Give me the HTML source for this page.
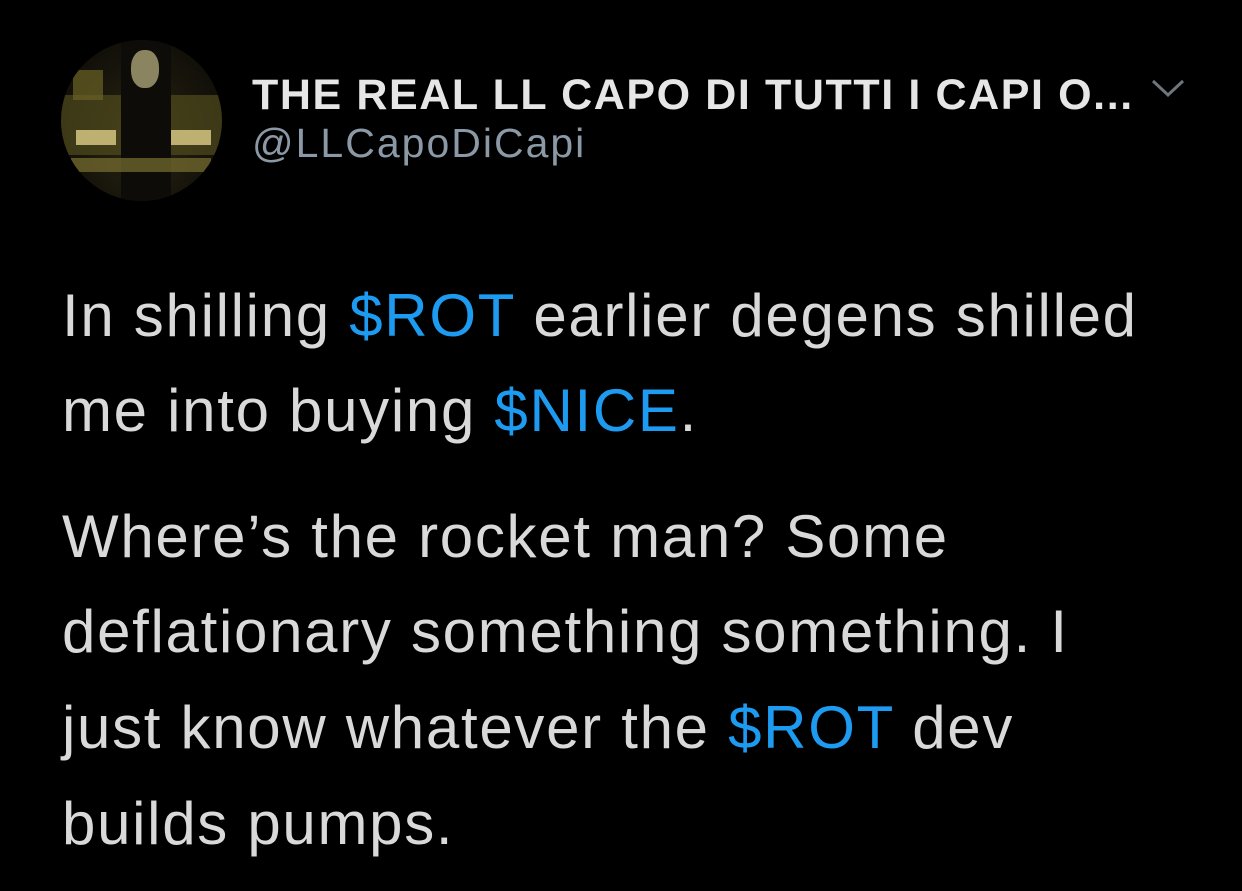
<!DOCTYPE html>
<html><head><style>
html,body{margin:0;padding:0;background:#000;width:1242px;height:891px;overflow:hidden}
body{position:relative;font-family:"Liberation Sans",sans-serif;color:#d9d9d9}
.av{position:absolute;left:61px;top:40px;width:161px;height:161px;border-radius:50%;overflow:hidden;background:radial-gradient(ellipse at 50% 60%,#2a2614 0%,#15130a 60%,#0a0a06 100%)}
.name{position:absolute;left:252px;top:71px;font-size:43px;letter-spacing:1.6px;font-weight:bold;color:#e6e6e6;white-space:nowrap}
.handle{position:absolute;left:252px;top:120px;font-size:41px;letter-spacing:2px;color:#8b98a5;white-space:nowrap}
.l{position:absolute;left:62px;font-size:60px;letter-spacing:1.7px;white-space:nowrap;color:#d9d9d9}
.b{color:#1d9bf0}
</style></head><body>
<div class="av">
<div style="position:absolute;left:0;top:55px;width:161px;height:60px;background:#5a5420;opacity:.6"></div>
<div style="position:absolute;left:12px;top:30px;width:30px;height:30px;background:#6b6325;opacity:.7"></div>
<div style="position:absolute;left:60px;top:0;width:50px;height:161px;background:#0d0c08"></div>
<div style="position:absolute;left:70px;top:10px;width:28px;height:38px;border-radius:45%;background:#8a8460"></div>
<div style="position:absolute;left:15px;top:90px;width:40px;height:15px;background:#bdb070"></div>
<div style="position:absolute;left:110px;top:90px;width:40px;height:15px;background:#bdb070"></div>
<div style="position:absolute;left:10px;top:118px;width:140px;height:14px;background:#7a7030;opacity:.7"></div>
</div>
<div class="name">THE REAL LL CAPO DI TUTTI I CAPI O...</div>
<svg style="position:absolute;left:1150px;top:78px" width="36" height="22"><path d="M3 3 L18 17 L33 3" fill="none" stroke="#6e767d" stroke-width="3"/></svg>
<div class="handle">@LLCapoDiCapi</div>
<div class="l" style="top:281px">In shilling <span class="b">$ROT</span> earlier degens shilled</div>
<div class="l" style="top:376px">me into buying <span class="b">$NICE</span>.</div>
<div class="l" style="top:502px">Where’s the rocket man? Some</div>
<div class="l" style="top:597px">deflationary something something. I</div>
<div class="l" style="top:693px">just know whatever the <span class="b">$ROT</span> dev</div>
<div class="l" style="top:789px">builds pumps.</div>
</body></html>
